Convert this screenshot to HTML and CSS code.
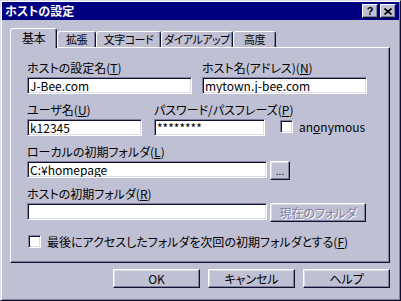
FILE: index.html
```html
<!DOCTYPE html>
<html lang="ja">
<head>
<meta charset="UTF-8">
<title>ホストの設定</title>
<link rel="stylesheet" href="styles.css">
</head>
<body>
<div class="window">
  <div class="titlebar">
    <span class="title">ホストの設定</span>
    <div class="title-buttons">
      <span class="tbtn">?</span>
      <span class="tbtn">
        <svg width="8" height="7" viewBox="0 0 8 7"><path d="M0.5 0.5 L7.5 6.5 M7.5 0.5 L0.5 6.5" stroke="#000" stroke-width="1.6"/></svg>
      </span>
    </div>
  </div>
  <div class="content">
    <div class="tabs">
      <span class="tab selected t-basic">基本</span>
      <span class="tab t-ext">拡張</span>
      <span class="tab t-code">文字コード</span>
      <span class="tab t-dial">ダイアルアップ</span>
      <span class="tab t-adv">高度</span>
    </div>
    <div class="panel">
      <div class="row">
        <div class="field w165">
          <div class="label">ホストの設定名(<u>T</u>)</div>
          <div class="input">J-Bee.com</div>
        </div>
        <div class="field w165">
          <div class="label">ホスト名(アドレス)(<u>N</u>)</div>
          <div class="input">mytown.j-bee.com</div>
        </div>
      </div>
      <div class="row">
        <div class="field w115">
          <div class="label">ユーザ名(<u>U</u>)</div>
          <div class="input">k12345</div>
        </div>
        <div class="field w111">
          <div class="label">パスワード/パスフレーズ(<u>P</u>)</div>
          <div class="input">********</div>
        </div>
        <div class="check anon">
          <span class="box"></span>
          <span>an<u>o</u>nymous</span>
        </div>
      </div>
      <div class="row">
        <div class="label">ローカルの初期フォルダ(<u>L</u>)</div>
        <div class="line">
          <div class="input w240">C:¥homepage</div>
          <span class="btn small">...</span>
        </div>
      </div>
      <div class="row tight">
        <div class="label">ホストの初期フォルダ(<u>R</u>)</div>
        <div class="line">
          <div class="input w240"></div>
          <span class="btn disabled">現在のフォルダ</span>
        </div>
      </div>
      <div class="check last">
        <span class="box"></span>
        <span>最後にアクセスしたフォルダを次回の初期フォルダとする(<u>F</u>)</span>
      </div>
    </div>
    <div class="buttons">
      <span class="btn wide">OK</span>
      <span class="btn wide">キャンセル</span>
      <span class="btn wide">ヘルプ</span>
    </div>
  </div>
</div>
</body>
</html>
```

FILE: styles.css
```css
body {
  margin: 0;
  font-family: "Noto Sans CJK JP", sans-serif;
  font-size: 12px;
  font-feature-settings: "palt";
  color: #000;
}

.window {
  width: 401px;
  height: 301px;
  box-sizing: border-box;
  background-color: #c0c0d4;
  border: 1px solid;
  border-color: #dcdce8 #101030 #101030 #dcdce8;
  box-shadow: inset 1px 1px #fff, inset -1px -1px #8080a0;
  padding: 1px;
}

.titlebar {
  height: 18px;
  background-color: #000080;
  color: #fff;
  display: flex;
  align-items: center;
  justify-content: space-between;
  padding: 0 3px 0 3px;
}

.title {
  font-weight: bold;
  line-height: 18px;
}

.title-buttons {
  display: flex;
  gap: 2px;
}

.tbtn {
  width: 16px;
  height: 14px;
  box-sizing: border-box;
  background-color: #c0c0d4;
  border: 1px solid;
  border-color: #fff #101030 #101030 #fff;
  box-shadow: inset -1px -1px #8080a0;
  display: flex;
  align-items: center;
  justify-content: center;
  color: #000;
  font: bold 11px "Liberation Sans", sans-serif;
}

.content {
  padding: 8px 0 0 8px;
}

.tabs {
  display: flex;
  align-items: flex-end;
  height: 20px;
  margin-bottom: -1px;
  position: relative;
}

.tab {
  height: 16px;
  box-sizing: border-box;
  margin-bottom: 1px;
  border: 1px solid;
  border-bottom: none;
  border-color: #fff #101030 transparent #fff;
  border-radius: 3px 3px 0 0;
  box-shadow: inset -1px 0 #8080a0;
  background-color: #c0c0d4;
  font-size: 11px;
  line-height: 15px;
  text-align: center;
  letter-spacing: -0.5px;
  white-space: nowrap;
}

.tab.selected {
  height: 20px;
  margin-bottom: 0;
  font-size: 12px;
  line-height: 17px;
}

.t-basic { width: 47px; }
.t-ext { width: 39px; }
.t-code { width: 65px; }
.t-dial { width: 72px; }
.t-adv { width: 43px; }

.panel {
  width: 380px;
  height: 216px;
  box-sizing: border-box;
  border: 1px solid;
  border-color: #fff #101030 #101030 #fff;
  box-shadow: inset -1px -1px #8080a0;
  padding: 12px 0 0 16px;
}

.row {
  display: flex;
  align-items: flex-end;
  gap: 10px;
}

.row + .row {
  margin-top: 8px;
}

.row:nth-child(3),
.row:nth-child(4) {
  flex-direction: column;
  align-items: flex-start;
  gap: 0;
}

.row.tight {
  margin-top: 6px;
}

.label {
  line-height: 16px;
  margin-bottom: 1px;
  white-space: nowrap;
}

.w165 { width: 165px; }
.w115 { width: 115px; margin-right: 2px; }
.w111 { width: 111px; }
.w240 { width: 240px; }

.input {
  height: 17px;
  box-sizing: border-box;
  background-color: #fff;
  border: 1px solid;
  border-color: #8080a0 #fff #fff #8080a0;
  box-shadow: inset 1px 1px #101030, inset -1px -1px #dcdce8;
  padding: 0 2px;
  line-height: 15px;
  white-space: nowrap;
  overflow: hidden;
}

.line {
  display: flex;
  align-items: flex-start;
  gap: 3px;
}

.btn {
  height: 19px;
  box-sizing: border-box;
  border: 1px solid;
  border-color: #fff #101030 #101030 #fff;
  box-shadow: inset -1px -1px #8080a0, inset 1px 1px #dcdce8;
  background-color: #c0c0d4;
  display: flex;
  align-items: center;
  justify-content: center;
  white-space: nowrap;
}

.btn.small {
  width: 20px;
  font-size: 10px;
}

.btn.disabled {
  width: 96px;
  color: #8080a0;
  text-shadow: 1px 1px #fff;
}

.btn.wide {
  width: 87px;
}

.check {
  display: flex;
  align-items: center;
  gap: 6px;
}

.check.anon {
  margin-left: 5px;
  margin-bottom: 1px;
}

.check.last {
  margin-top: 11px;
  margin-left: 1px;
}

.box {
  width: 13px;
  height: 13px;
  box-sizing: border-box;
  background-color: #fff;
  border: 1px solid;
  border-color: #8080a0 #fff #fff #8080a0;
  box-shadow: inset 1px 1px #101030, inset -1px -1px #dcdce8;
}

.buttons {
  width: 380px;
  margin-top: 6px;
  display: flex;
  justify-content: flex-end;
  gap: 8px;
}
```
